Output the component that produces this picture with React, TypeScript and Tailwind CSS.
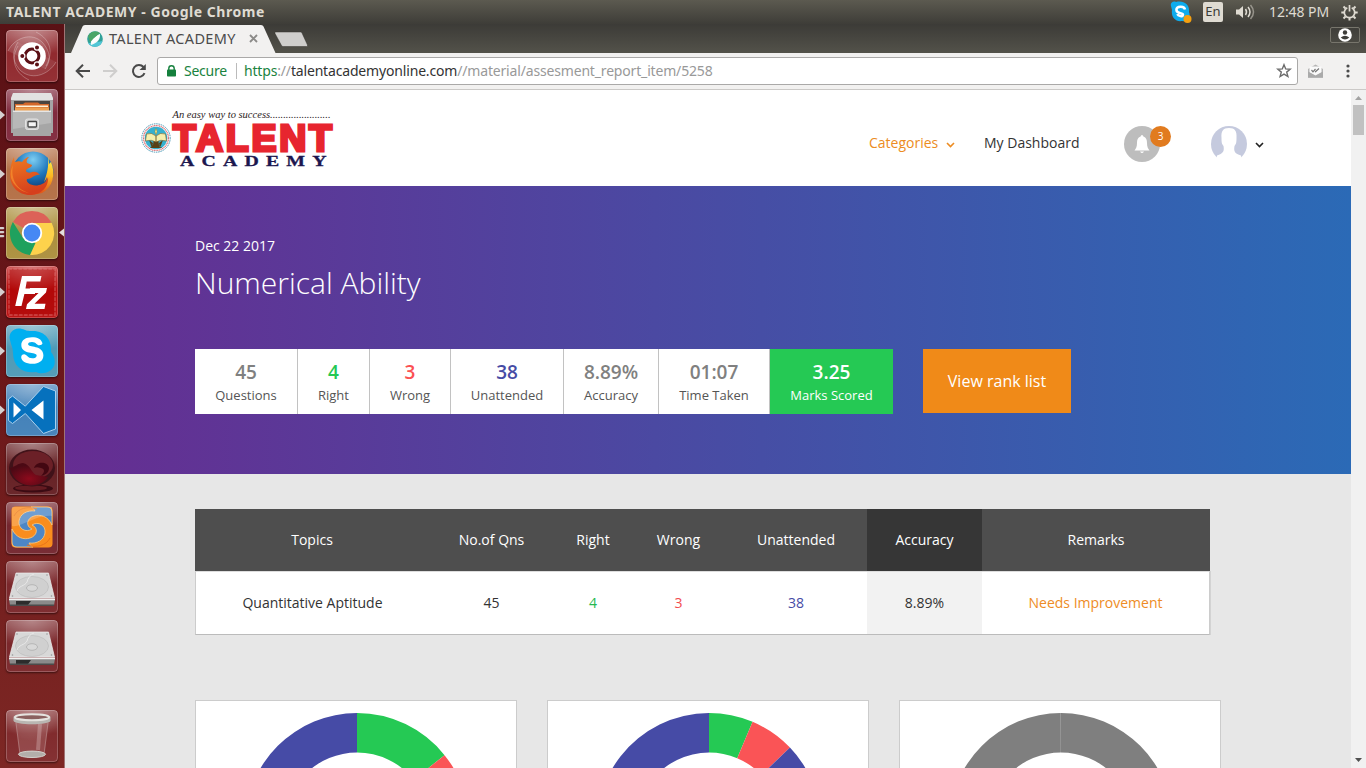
import React from "react";
import type { ReactNode } from "react";

function Tile({ id, base, children, marks = 0, active = false }: { id: string; base: string; children?: ReactNode; marks?: number; active?: boolean }) {
  return (
    <div className="relative ml-[6px] h-[52px] w-[52px] shrink-0">
      <svg width="52" height="52" viewBox="0 0 52 52" className="block rounded-[4px] shadow-[0_1px_2px_rgba(0,0,0,0.5)]">
        <defs>
          <linearGradient id={`g-${id}`} x1="0" y1="0" x2="0" y2="1">
            <stop offset="0" stopColor="#fff" stopOpacity=".3" />
            <stop offset=".45" stopColor="#fff" stopOpacity=".05" />
            <stop offset="1" stopColor="#fff" stopOpacity=".08" />
          </linearGradient>
          <radialGradient id={`r-${id}`} cx=".5" cy="0" r=".6">
            <stop offset="0" stopColor="#fff" stopOpacity=".25" />
            <stop offset="1" stopColor="#fff" stopOpacity="0" />
          </radialGradient>
        </defs>
        <rect width="52" height="52" rx="4" fill={base} />
        <rect width="52" height="52" rx="4" fill={`url(#g-${id})`} />
        <rect width="52" height="52" rx="4" fill={`url(#r-${id})`} />
        {children}
        <rect x=".5" y=".5" width="51" height="51" rx="3.5" fill="none" stroke="#fff" strokeOpacity=".22" />
      </svg>
      {marks === 1 && (
        <svg className="absolute top-[21px] -left-[6px]" width="5" height="10"><path d="M0 .5 5 5 0 9.5z" fill="#d5d0d0" /></svg>
      )}
      {marks === 3 && (
        <svg className="absolute top-[20px] -left-[6px]" width="5" height="11"><path d="M0 0h3.500l1 1-1 1.200H0zM0 4h3.500l1 1-1 1.200H0zM0 8h3.500l1 1-1 1.200H0z" fill="#d5d0d0" /></svg>
      )}
      {active && (
        <svg className="absolute top-[21px] left-[53px]" width="5" height="9"><path d="M5 .5 0 4.5 5 8.5z" fill="#e3dede" /></svg>
      )}
    </div>
  );
}

function Disk() {
  return (
    <>
      <path d="M10 12h32.500l6 25H3.500z" fill="#d8d8d8" stroke="#efefef" strokeWidth=".7" />
      <ellipse cx="26" cy="26" rx="16.500" ry="10.500" fill="#d0d0d0" stroke="#bdbdbd" strokeWidth=".7" />
      <path d="M11 30c1-5 8-5 10-9 1-4 3-7 7-8" fill="none" stroke="#e8e8e8" />
      <ellipse cx="26" cy="27" rx="5.500" ry="3.300" fill="#d8d8d8" stroke="#adadad" strokeWidth=".8" />
      <path d="M3 38.500h46l-1 6H4z" fill="#8a8a8a" />
      <path d="M3 37.500h46v1.700H3z" fill="#f1f1f1" />
      <path d="M10 40h15l-3 4H10z" fill="#2c2c2c" />
      <path d="M4 43.500h44v1.500H4z" fill="#4b4b4b" />
      <g fill="#999"><circle cx="11" cy="14" r=".8" /><circle cx="41" cy="14" r=".8" /><circle cx="6.500" cy="35" r=".8" /><circle cx="45.500" cy="35" r=".8" /></g>
    </>
  );
}

const swirlArm = "M25 5H41Q46 5 46 10V23C42 14 34 12 28 14C21 16 19 24 26 27C20 31 12 27 13 19C14 12 21 8 29 9C28 7 27 6 25 5z";

function Launcher() {
  return (
    <aside className="flex w-[65px] shrink-0 flex-col gap-[7px] border-r border-[#a07374] bg-linear-to-b from-[#5a1115] via-[#6c181a] to-[#7d2724] pt-[6px] pb-[6px]">
      <Tile id="dash" base="#8b1f24">
        <g fill="none" stroke="#fff" strokeOpacity=".28" strokeWidth="1">
          <path d="M2 21C8 8 26 1 37 13c9 11 7 19 2 26" fill="#fff" fillOpacity=".1" />
          <path d="M50 32c-8 14-26 19-37 7C5 29 7 20 12 12" fill="#fff" fillOpacity=".08" />
          <path d="M30 2c16 8 17 22 10 34" /><path d="M23 50C7 42 5 28 12 16" />
        </g>
        <circle cx="26" cy="26" r="13.800" fill="#fff" />
        <circle cx="26" cy="26" r="6.900" fill="none" stroke="#5b1015" strokeWidth="3" />
        <g fill="#5b1015" stroke="#fff" strokeWidth="1.200"><circle cx="16.300" cy="26" r="2.600" /><circle cx="31" cy="17.500" r="2.600" /><circle cx="31" cy="34.500" r="2.600" /></g>
      </Tile>
      <Tile id="files" base="#7a1f33" marks={1}>
        <path d="M7 4h38l2 8v32H5V12z" fill="#a5a5a5" /><path d="M7 4h38l2 5v2H5V9z" fill="#e2e2e2" />
        <path d="M8 12h36v10H8z" fill="#4a4440" />
        <path d="M9 15h8l2-1.500h13l2 1.500h9v8H9z" fill="#d4682a" /><path d="M10 16.500h32v1.500H10z" fill="#fff2d8" /><path d="M9 18.500h34V23H9z" fill="#eda153" />
        <path d="M7 22h38v25H7z" fill="#a6a6a6" /><path d="M7 22h38v12L7 40z" fill="#b8b8b8" /><path d="M7 21.500h38v1.500H7z" fill="#e5e5e5" />
        <rect x="19.500" y="30" width="13" height="10.500" rx="2" fill="#cfcfcf" stroke="#e2e2e2" /><rect x="22" y="32.500" width="8.500" height="5.500" rx=".8" fill="#f5f5f5" stroke="#484848" strokeWidth="1.300" />
      </Tile>
      <Tile id="ff" base="#b0683c" marks={1}>
        <defs>
          <radialGradient id="ffb" cx=".5" cy=".2" r=".8"><stop offset="0" stopColor="#7dcdf2" /><stop offset=".5" stopColor="#1d77bd" /><stop offset="1" stopColor="#0b2e66" /></radialGradient>
          <linearGradient id="ffo" x1="0" y1="0" x2=".3" y2="1"><stop offset="0" stopColor="#ef7b22" /><stop offset="1" stopColor="#d63f1c" /></linearGradient>
          <linearGradient id="ffy" x1="0" y1="0" x2="0" y2="1"><stop offset="0" stopColor="#fff04d" /><stop offset=".5" stopColor="#fcb823" /><stop offset="1" stopColor="#df4a19" /></linearGradient>
        </defs>
        <circle cx="27" cy="24" r="20.500" fill="url(#ffb)" />
        <path d="M42 9c1 3 1 5 1 7l2-2c5 12 2 25-9 31l-10 2c10-4 15-11 15-18-1 2-2 4-3 5 3-8 5-16 4-25z" fill="url(#ffy)" />
        <path d="M8 9c0 2 0 3 1 5 3-1 5-1 7 0 2-3 5-5 7-5-2 2-3 4-2 6l5 2c0 3-6 3-6 6 1 2 4 2 6 1 3-1 6 0 8 3-6-1-7 4-13 4-2 4 7 9 15 5 3-1 5-4 6-7 1 9-6 18-18 18C12 47 4 38 4 27c0-7 1-12 4-18z" fill="url(#ffo)" />
        <path d="M7 17c-3 15 5 25 16 28-8-1-16-8-18-15-1-5 0-9 2-13z" fill="#fa9a32" opacity=".6" />
      </Tile>
      <Tile id="chrome" base="#a88a34" marks={3} active>
        <path d="M26 26 6.900 15A22 22 0 0 1 45.100 15z" fill="#dc6258" />
        <path d="M26 26V16h19.700A22 22 0 0 1 24 48z" fill="#fdd24c" />
        <path d="M6.900 15 17 31l12.500 5L24 48A22 22 0 0 1 6.900 15z" fill="#1fa15e" />
        <circle cx="26" cy="26" r="10.200" fill="#fff" /><circle cx="26" cy="26" r="8.400" fill="#4688f4" />
      </Tile>
      <Tile id="fz" base="#b40000" marks={1}>
        <rect x="3" y="3" width="46" height="46" fill="#a80000" fillOpacity=".35" stroke="#e08080" strokeOpacity=".4" strokeWidth="1.800" strokeDasharray="2.500 2.500" strokeLinecap="round" />
        <path d="M16 10h19.500l-1.200 5.500H20.700l-1.200 7H30l-1.100 5.500H18.400L15.500 40H9.200z" fill="#fff" />
        <path d="M24 22h17l-1 4.500-11.500 11.200H39.500L38.500 43H20l1-4.700L32.500 27H23z" fill="#fff" />
      </Tile>
      <Tile id="skype" base="#4695b2" marks={1}>
        <path d="M4 15C2 8 8 2 16 4c4 1 4 2 9 2 14-1 21 9 20 21 5 6 5 14 0 18-5 4-11 4-15 2C19 49 7 43 7 28c0-5-2-8-3-13z" fill="#00aff0" />
        <path d="M36.500 18.500c-1-4.500-5-6.300-10.500-6.300-6 0-10.700 2.700-10.700 7.700 0 10 15.400 6.500 15.400 10.500 0 2-2.200 2.800-4.500 2.800-4.500 0-5.400-4-8-4-1.800 0-3 1.200-3 3 0 3.600 4.700 6.600 11.200 6.600 6.700 0 11-3.100 11-8.600 0-10.400-15.300-7.500-15.300-11 0-1.400 1.400-2.300 3.900-2.300 4.200 0 4.700 3.300 7.300 3.300 1.900 0 2.900-.9 3.200-1.700z" fill="#fff" />
      </Tile>
      <Tile id="code" base="#3a7bb5" marks={1}>
        <path d="m2.500 15 4-3 12.800 10.200L37.500 2.500l12 4.500v38l-12 4.500-18.200-20-12.800 10-4-3z" fill="#0671bd" stroke="#a9d0ee" strokeWidth="1" />
        <path d="M7.500 18.500v15l7.500-7.500zM37.500 16.500v19l-12-9.500z" fill="#fff" />
      </Tile>
      <Tile id="ball" base="#5e1519">
        <defs><radialGradient id="rb" cx=".5" cy=".7" r=".6"><stop offset="0" stopColor="#8d0a1c" /><stop offset="1" stopColor="#4b0914" /></radialGradient></defs>
        <ellipse cx="27" cy="45.500" rx="20" ry="4" fill="#3b0b13" /><ellipse cx="25" cy="45" rx="16" ry="2.500" fill="#651b21" />
        <ellipse cx="26" cy="25" rx="23" ry="18.500" fill="#401219" /><ellipse cx="27" cy="22" rx="20" ry="14" fill="#6b2027" />
        <path d="M4 25c5-1 8-5 13-5 7 1 8 9 13 12l12 2C35 46 9 47 4 25z" fill="url(#rb)" />
        <path d="M28 25c2-7 14-7 15 0 0 5-4 7-8 8 4-4 4-7 0-8-3-1-5-1-7 0z" fill="#420711" />
      </Tile>
      <Tile id="swirl" base="#6d1b24">
        <rect x="5.500" y="4.500" width="41" height="41" rx="4" fill="#f98d1e" />
        <path d={swirlArm} fill="#4c86c6" stroke="#ffca80" strokeWidth=".8" />
        <path d={swirlArm} fill="#4c86c6" stroke="#ffca80" strokeWidth=".8" transform="rotate(180 26 25)" />
        <path d="M8 14C12 6 22 4 31 7M44 36C40 44 30 46 21 43" fill="none" stroke="#e8741a" strokeWidth="1" />
        <path d="M6 5h40v9C31 12 15 26 6 24z" fill="#fff" opacity=".2" />
      </Tile>
      <Tile id="disk1" base="#741c20"><Disk /></Tile>
      <Tile id="disk2" base="#741c20"><Disk /></Tile>
      <div className="grow" />
      <Tile id="trash" base="#7a2022">
        <path d="M9 9h34l-4.500 36c-3 3-22 3-25 0z" fill="#d3aaa8" opacity=".22" />
        <path d="m10 13 4 31M42 13l-4 31" stroke="#e1cfcf" strokeOpacity=".3" fill="none" />
        <path d="m34 14-2 26" stroke="#e9d5d5" strokeOpacity=".3" strokeWidth="4" />
        <ellipse cx="26" cy="44.300" rx="13.500" ry="3.200" fill="#b3aeaa" stroke="#d4d2ce" />
        <path d="M7.500 7c0-4 37-4 37 0v3.500c0 5-37 5-37 0z" fill="#b9b6b2" /><ellipse cx="26" cy="7.200" rx="17" ry="3" fill="#8a615f" stroke="#e5e3df" strokeWidth="2" />
      </Tile>
    </aside>
  );
}

function TopPanel() {
  return (
    <div className="flex h-6 shrink-0 items-center bg-linear-to-b from-[#5c5a50] to-[#3e3d38] pl-[6px] font-['Noto_Sans'] text-[#dfdbd2]">
      <span className="w-[262px] text-[14px] leading-6 font-bold tracking-[0.53px] whitespace-nowrap">TALENT ACADEMY - Google Chrome</span>
      <div className="ml-auto flex h-6 items-center">
        <svg width="22" height="22" viewBox="0 0 22 22">
          <path d="M1 5C0 2 3-.5 6 1c8-2 14 3 13 10 2 5-1 10-7 9C5 21 1 16 2 9z" fill="#0eaced" />
          <path d="M14.500 8c-.6-4-8.600-3.600-8.600.3 0 4.500 6.600 2.600 6.600 5 0 2.500-4.900 1.300-5.700-.7" transform="translate(.5 .5)" fill="none" stroke="#fff" strokeWidth="2.500" />
          <circle cx="17.500" cy="18" r="4" fill="#f5a010" />
        </svg>
        <span className="ml-[11px] flex h-5 w-5 items-center justify-center rounded-[2px] bg-[#dfdbd2] text-[13px] text-[#3c3b37]">En</span>
        <svg className="ml-[13px]" width="20" height="18" viewBox="0 0 20 18"><path d="M0 6.500h3L7 3v12l-4-3.500H0z" fill="#dfdbd2" /><g fill="none" strokeWidth="1.500" stroke="#dfdbd2"><path d="M9.500 6q2 3 0 6" /><path d="M12 4q4 5 0 10" /><path d="M14.500 2q6 7 0 14" opacity=".5" /></g></svg>
        <span className="ml-[13px] w-[62px] text-[14px] leading-6 tracking-[-0.05px] whitespace-nowrap">12:48 PM</span>
        <svg className="mr-[8px] ml-[10px]" width="17" height="17" viewBox="0 0 17 17">
          <path d="M6.300 3.800a5.200 5.200 0 1 0 4.400 0" fill="none" stroke="#dfdbd2" strokeWidth="1.700" />
          <path d="M8.500 1v6.500" stroke="#dfdbd2" strokeWidth="1.700" />
          <path d="m2.500 2.500 2 2m8 0 2-2M.3 8.500H3m11 0h2.700m-14.200 6 2-2m8 0 2 2m-6-1v3" fill="none" stroke="#dfdbd2" strokeWidth="2" />
        </svg>
      </div>
    </div>
  );
}

function BrowserBars() {
  return (
    <>
      <div className="flex h-[29px] shrink-0 items-start bg-linear-to-b from-[#3c3b37] to-[#53524a]">
        <div className="relative ml-[6px] h-[29px] w-[206px]">
          <svg className="absolute inset-0" width="206" height="29"><path d="M0 29 11.500 2.500Q12 1 14 1h176q2 0 2.500 1.500L204.500 29z" fill="#f2f1f0" /></svg>
          <div className="relative flex h-[29px] items-center pl-[16px]">
            <svg width="16" height="16" viewBox="0 0 16 16"><circle cx="8" cy="8" r="7.800" fill="#2fa098" /><path d="M1 12A8 8 0 0 0 15.500 10L5 12z" fill="#51c6d6" /><path d="M4 14C3 9 6 5 13 3 13.500 9 10 12 4 14z" fill="#f5fbf8" /><path d="M1 5Q6-2 13 2L3 11z" fill="#4ba568" /><path d="M4.500 12.500Q5 7 12.500 3.500 13 9 4.500 12.500z" fill="#fff" /></svg>
            <span className="ml-[6px] w-[130px] font-['Noto_Sans'] text-[14.500px] tracking-[0.32px] whitespace-nowrap text-[#4b4b4b]">TALENT ACADEMY</span>
            <svg className="ml-[10px]" width="9" height="9"><path d="m1 1 7 7m0-7L1 8" stroke="#8b8a88" strokeWidth="1.900" /></svg>
          </div>
        </div>
        <svg className="mt-[7px] -ml-[3px]" width="34" height="17"><path d="M1.500 1h25q1 0 1.500 1l5.500 12q.5 1.500-1 1.500h-23q-1.500 0-2-1L1 2.500Q.5 1 1.500 1z" fill="#cfcecc" stroke="#34332f" strokeWidth=".5" /></svg>
        <div className="mt-[3px] mr-[6px] ml-auto flex h-4 w-[30px] items-center justify-center rounded-[2px] border border-[#77756c]">
          <svg width="14" height="14" viewBox="0 0 14 14"><circle cx="7" cy="7" r="6.800" fill="#fff" /><circle cx="7" cy="4.500" r="2.200" fill="#3e3d39" /><path d="M2.700 9.500q4.300-3.500 8.600 0Q7 13.500 2.700 9.500z" fill="#3e3d39" /></svg>
        </div>
      </div>
      <div className="flex h-[37px] shrink-0 items-center border-b border-[#cbc9c7] bg-[#f2f1f0] font-['Noto_Sans']">
        <svg className="ml-[10px]" width="15" height="14"><path d="M15 7H2M8 .8 1.700 7 8 13.200" fill="none" stroke="#494949" strokeWidth="2" /></svg>
        <svg className="ml-[13px]" width="15" height="14"><path d="M0 7h13M7 .8 13.300 7 7 13.200" fill="none" stroke="#cfcecd" strokeWidth="2" /></svg>
        <svg className="ml-[13px]" width="16" height="16" viewBox="0 0 16 16"><path d="M13.500 10.200A6 6 0 1 1 12.500 4" fill="none" stroke="#494949" strokeWidth="2" /><path d="M14.800 1v6H8.500z" fill="#494949" /></svg>
        <div className="ml-[10px] flex h-7 w-[1141px] items-center rounded-[3px] border border-[#aaa9a8] bg-white pl-[9px] text-[14px] whitespace-nowrap">
          <svg width="9" height="12"><path d="M1.800 5V3.500a2.700 2.700 0 0 1 5.400 0V5" fill="none" stroke="#15803d" strokeWidth="1.400" /><rect y="4.500" width="9" height="7" rx=".8" fill="#15803d" /></svg>
          <span className="-mt-[2px] ml-[8px] w-[43px] tracking-[-0.24px] text-[#1a8340]">Secure</span>
          <span className="ml-[9px] h-4 w-px bg-[#bbb]" />
          <span className="-mt-[2px] ml-[7px] tracking-[-0.17px] text-[#999]"><span className="text-[#1a8340]">https</span>://<span className="text-[#333]">talentacademyonline.com</span>//material/assesment_report_item/5258</span>
          <svg className="mr-[5px] ml-auto" width="16" height="16" viewBox="0 0 16 16"><path d="m8 1.700 1.700 4.200 4.500.3-3.500 2.900 1.200 4.400L8 11.100l-3.900 2.400 1.200-4.400-3.500-2.900 4.500-.3z" fill="none" stroke="#6c6c6c" strokeWidth="1.400" /></svg>
        </div>
        <svg className="ml-[9px]" width="17" height="15" viewBox="0 0 17 15"><path d="M1 5 8.500.5 16 5v9H1z" fill="#b5b5b5" /><path d="M2.500 2.500h12v6L8.500 12 2.500 8.500z" fill="#fafafa" /><path d="m4.500 6 1.500 1.800L8.500 5m-.5 2.500.5.300L12 4.500" stroke="#777" fill="none" strokeWidth="1.200" /><path d="m1 7.500 7.500 4 7.500-4V13H1z" fill="#aaa" /></svg>
        <svg className="ml-[22px]" width="4" height="14"><g fill="#4b4b4b"><circle cx="2" cy="2" r="1.600" /><circle cx="2" cy="7" r="1.600" /><circle cx="2" cy="12" r="1.600" /></g></svg>
      </div>
    </>
  );
}

function Chevron({ className }: { className: string }) {
  return <svg className={className} width="9" height="6"><path d="m1 1 3.500 3.500L8 1" fill="none" stroke="currentColor" strokeWidth="1.600" /></svg>;
}

function Logo() {
  return (
    <svg className="mt-[17px] ml-[75px] shrink-0" width="196" height="64" viewBox="140 107 196 64">
      <circle cx="156" cy="138" r="14.200" fill="#fff" stroke="#4598b5" strokeWidth="1" strokeDasharray="1.500 .8" />
      <circle cx="156" cy="138" r="12.400" fill="none" stroke="#dc7378" strokeWidth="1.300" strokeDasharray="1.200 .5" />
      <circle cx="156" cy="138" r="11.200" fill="#36b0cf" />
      <path d="M154 138h4l1 7 3 3h-12l3-3zM149 140l4 3-1 5zM163 140l-4 3 1 5z" fill="#584016" />
      <path d="M146.500 134q5-2 9.500 2 4.500-4 9.500-2l1 7q-6-2-10.500 1-4.500-3-10.500-1z" fill="#f6efad" stroke="#745e2b" strokeWidth=".6" />
      <path d="M156 128.500q-2 3 0 6 2-3 0-6z" fill="#fff59a" stroke="#8e7627" strokeWidth=".5" /><path d="M156 136v6" stroke="#745e2b" />
      <text x="172.500" y="118" fill="#2b1c1c" className="font-['Liberation_Serif'] text-[10.500px] italic" textLength="158" lengthAdjust="spacing">An easy way to success.......................</text>
      <text x="173" y="151" fill="#e7252f" stroke="#e7252f" strokeWidth="3" strokeLinejoin="miter" className="font-['Liberation_Sans'] text-[37.500px] font-bold" textLength="159" lengthAdjust="spacing">TALENT</text>
      <text transform="translate(180 165.700) scale(1.280 1)" x="0" y="0" fill="#1c174f" stroke="#1c174f" strokeWidth=".3" className="font-['Liberation_Serif'] text-[15.500px] font-bold" textLength="114.500" lengthAdjust="spacing">ACADEMY</text>
    </svg>
  );
}

function SiteHeader() {
  return (
    <header className="flex h-24 shrink-0 items-start bg-white text-[14px] text-[#333]">
      <Logo />
      <nav className="mt-[36px] mr-[87px] ml-auto flex h-[36px] items-center">
        <span className="-mt-[4px] w-[70px] whitespace-nowrap text-[#ec8c22]">Categories</span>
        <Chevron className="mt-[2px] ml-[7px] text-[#ec8c22]" />
        <span className="-mt-[4px] ml-[29px] w-[96px] whitespace-nowrap">My Dashboard</span>
        <div className="relative ml-[44px] flex h-9 w-9 items-center justify-center rounded-full bg-[#bdbdbd]">
          <svg width="16" height="19" viewBox="0 0 16 19"><path d="M8 0q1.200 0 1.400 1.500C12.300 2.500 13 5 13 8c0 4 1 5.500 2.500 7.500H.5C2 13.500 3 12 3 8c0-3 .7-5.500 3.600-6.500Q6.800 0 8 0zM6 16.500h4Q8 19.500 6 16.500z" fill="#fff" /></svg>
          <span className="absolute top-0 left-[26px] flex h-[21px] w-[21px] items-center justify-center rounded-full bg-[#e17b1f] text-[10px] text-white">3</span>
        </div>
        <svg className="ml-[51px]" width="36" height="36" viewBox="0 0 36 36"><circle cx="18" cy="18" r="18" fill="#c5cade" /><path d="M18 2c6 0 8 3 7.500 10 0 5-.5 6-2 8-1 6 .5 7.500 6.500 9.500l1 6.500H5l1-6.500c6-2 7.500-4 6.500-9.500-1.500-2-2-3-2-8C10 5 12 2 18 2z" fill="#fff" /></svg>
        <Chevron className="mt-[2px] ml-[8px] text-[#222]" />
      </nav>
    </header>
  );
}

const stats = [
  { value: "45", label: "Questions", cell: "w-[103px] border-r", tone: "text-[#808080]" },
  { value: "4", label: "Right", cell: "w-[72px] border-r", tone: "text-[#25c854]" },
  { value: "3", label: "Wrong", cell: "w-[81px] border-r", tone: "text-[#fb5052]" },
  { value: "38", label: "Unattended", cell: "w-[113px] border-r", tone: "text-[#464ba5]" },
  { value: "8.89%", label: "Accuracy", cell: "w-[95px] border-r", tone: "text-[#808080]" },
  { value: "01:07", label: "Time Taken", cell: "w-[111px] border-r", tone: "text-[#808080]" },
];

function Hero() {
  return (
    <section className="h-[288px] shrink-0 bg-linear-to-r/srgb from-[#662d91] to-[#2b6ab6] pl-[130px] text-white">
      <p className="pt-[50px] text-[14px] leading-5">Dec 22 2017</p>
      <h1 className="mt-[7px] text-[30px] leading-10 font-light">Numerical Ability</h1>
      <div className="mt-[46px] flex items-start">
        <div className="flex h-[65px]">
          {stats.map((s) => (
            <div key={s.label} className={`${s.cell} border-[#c2c2c2] bg-white text-center`}>
              <div className={`mt-[10px] text-[19px] leading-[26px] font-semibold ${s.tone}`}>{s.value}</div>
              <div className="text-[13px] leading-5 text-[#555]">{s.label}</div>
            </div>
          ))}
          <div className="w-[123px] bg-[#25c954] text-center">
            <div className="mt-[10px] text-[19px] leading-[26px] font-semibold">3.25</div>
            <div className="text-[13px] leading-5">Marks Scored</div>
          </div>
        </div>
        <button className="ml-[30px] h-16 w-[148px] bg-[#f08a18] text-[16px]">View rank list</button>
      </div>
    </section>
  );
}

const columns = "grid grid-cols-[234px_125px_78px_93px_142px_115px_228px] text-center text-[14px]";

function Topics() {
  return (
    <div className="ml-[130px] w-[1015px]">
      <div className={`${columns} h-[62px] bg-[#4e4e4e] leading-[62px] text-white`}>
        <span>Topics</span><span>No.of Qns</span><span>Right</span><span>Wrong</span><span>Unattended</span>
        <span className="bg-[#363636]">Accuracy</span><span>Remarks</span>
      </div>
      <div className={`${columns} h-16 border border-t-[#ddd] border-r-[#ccc] border-b-[#bbb] border-l-[#ccc] bg-white leading-[62px] text-[#333] shadow-[1px_0_#d3d3d3]`}>
        <span className="pr-px">Quantitative Aptitude</span><span className="-ml-[2px]">45</span><span className="-ml-[2px] text-[#25b850]">4</span><span className="-ml-[2px] text-[#f24d50]">3</span><span className="-ml-[2px] text-[#464ba5]">38</span>
        <span className="mr-px -ml-px bg-[#f2f2f2]">8.89%</span><span className="-ml-px pr-[2px] text-[#ee8c25]">Needs Improvement</span>
      </div>
    </div>
  );
}

type Slice = { from: number; to: number; color: string };

function Donut({ slices }: { slices: Slice[] }) {
  const point = (deg: number, r: number) => {
    const a = (deg * Math.PI) / 180;
    return `${112 + r * Math.sin(a)} ${112 - r * Math.cos(a)}`;
  };
  return (
    <div className="h-[68px] w-[322px] overflow-hidden border border-b-0 border-[#ccc] bg-white pt-[12px] pl-[48.500px]">
      <svg width="224" height="224" viewBox="0 0 224 224">
        {slices.map((s) => {
          const large = s.to - s.from > 180 ? 1 : 0;
          return <path key={s.from} fill={s.color} d={`M${point(s.from, 112)}A112 112 0 ${large} 1 ${point(s.to, 112)}L${point(s.to, 72.5)}A72.5 72.5 0 ${large} 0 ${point(s.from, 72.5)}z`} />;
        })}
      </svg>
    </div>
  );
}

export default function App() {
  return (
    <div className="flex h-[768px] w-[1366px] flex-col overflow-hidden font-['Open_Sans',sans-serif]">
      <TopPanel />
      <div className="flex min-h-0 grow">
        <Launcher />
        <div className="flex w-[1301px] flex-col">
          <BrowserBars />
          <div className="flex min-h-0 grow">
            <main className="flex w-[1286px] flex-col overflow-hidden bg-[#e7e7e7]">
              <SiteHeader />
              <Hero />
              <div className="h-[35px] shrink-0" />
              <Topics />
              <div className="mt-[65px] ml-[130px] flex gap-[30px]">
                <Donut slices={[{ from: 0, to: 51.4, color: "#25c954" }, { from: 51.4, to: 90, color: "#fa5456" }, { from: 90, to: 360, color: "#464ba6" }]} />
                <Donut slices={[{ from: 0, to: 22.9, color: "#25c954" }, { from: 22.9, to: 46.3, color: "#fa5456" }, { from: 46.3, to: 360, color: "#464ba6" }]} />
                <Donut slices={[{ from: 0, to: 180, color: "#7f7f7f" }, { from: 180, to: 359.9, color: "#7f7f7f" }]} />
              </div>
            </main>
            <div className="flex w-[15px] flex-col items-center bg-[#f1f1f1]">
              <svg className="mt-[6px]" width="7" height="4"><path d="m0 4 3.500-4L7 4z" fill="#a3a3a3" /></svg>
              <div className="mt-[5px] h-[30px] w-[11px] bg-[#c1c1c1]" />
              <svg className="mt-auto mb-[6px]" width="7" height="4"><path d="m0 0 3.500 4L7 0z" fill="#505050" /></svg>
            </div>
          </div>
        </div>
      </div>
    </div>
  );
}
